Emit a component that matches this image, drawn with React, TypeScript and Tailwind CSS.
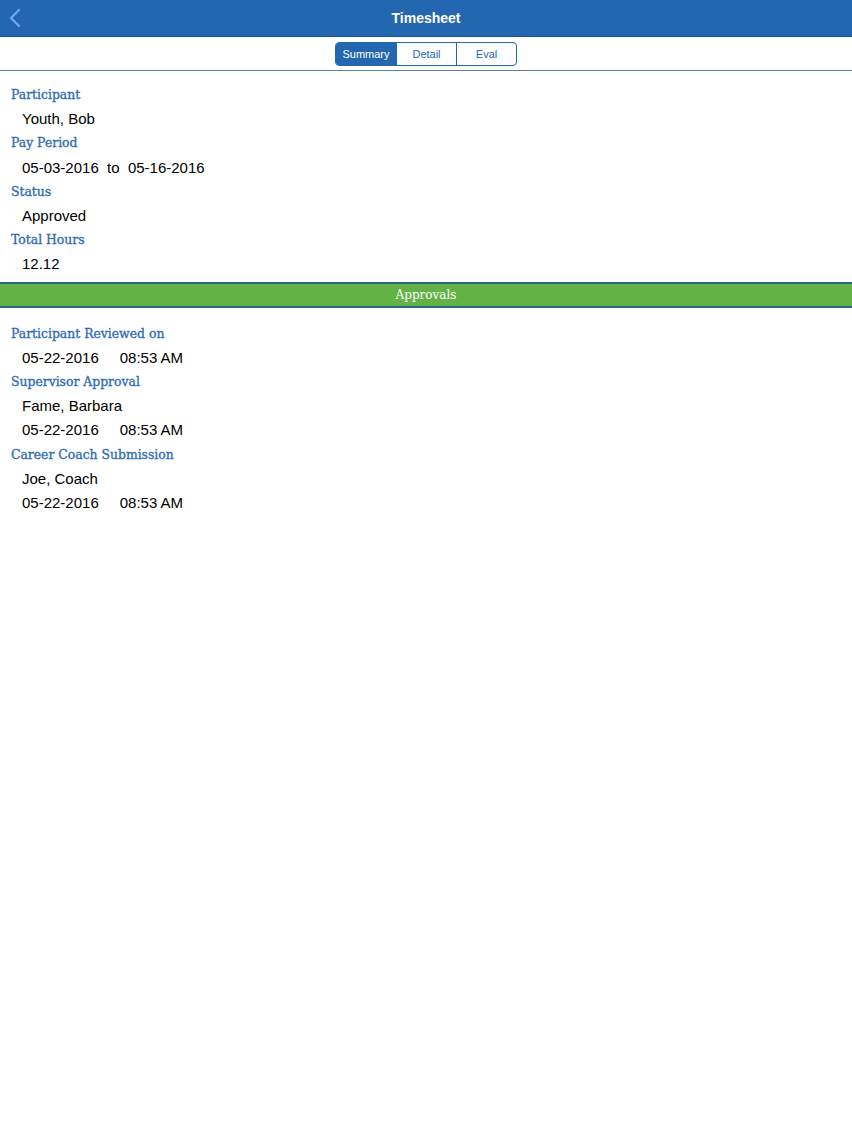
import React from 'react';

const label = 'font-["DejaVu_Serif",serif] text-[12.4px] text-[#2f6db3] leading-[24.2px] pl-[11px] [-webkit-text-stroke:0.35px_#2f6db3]';
const value = 'text-[15px] text-black leading-[24.2px] pl-[22px]';

function Label({ children }: { children: React.ReactNode }) {
  return <div className={label}>{children}</div>;
}

function Value({ children }: { children: React.ReactNode }) {
  return <div className={value}>{children}</div>;
}

function Stamp({ date, time }: { date: string; time: string }) {
  return (
    <div className={`${value} flex gap-[21px]`}>
      <span>{date}</span>
      <span>{time}</span>
    </div>
  );
}

export default function App() {
  const tabs = ['Summary', 'Detail', 'Eval'];

  return (
    <div className='min-h-[1136px] w-full bg-white font-["Liberation_Sans",Arial,sans-serif]'>
      {/* Nav bar */}
      <div className="relative flex h-[37px] items-center justify-center border-b border-[#1b5597] bg-[#2467b1]">
        <button className="absolute left-[8px] top-[8px] text-[#6fa6e6]" aria-label="Back">
          <svg width="14" height="20" viewBox="0 0 14 20" fill="none">
            <path d="M11 2 L3 10 L11 18" stroke="currentColor" strokeWidth="2.4" strokeLinecap="round" strokeLinejoin="round" />
          </svg>
        </button>
        <h1 className="text-[14px] font-bold text-white">Timesheet</h1>
      </div>

      {/* Segmented control */}
      <div className="flex justify-center border-b border-[#5a7fa8] pt-[5px] pb-[4px]">
        <div className="flex h-[24px] overflow-hidden rounded-[4px] border border-[#2467b1]">
          {tabs.map((t, i) => (
            <div
              key={t}
              className={`flex w-[60px] items-center justify-center text-[11px] ${
                i === 0 ? 'bg-[#2467b1] text-white' : 'text-[#2467b1]'
              } ${i > 0 ? 'border-l border-[#2467b1]' : ''}`}
            >
              {t}
            </div>
          ))}
        </div>
      </div>

      {/* Summary */}
      <div className="pt-[12px] pb-[5px]">
        <Label>Participant</Label>
        <Value>Youth, Bob</Value>
        <Label>Pay Period</Label>
        <Value>05-03-2016&nbsp;&nbsp;to&nbsp;&nbsp;05-16-2016</Value>
        <Label>Status</Label>
        <Value>Approved</Value>
        <Label>Total Hours</Label>
        <Value>12.12</Value>
      </div>

      {/* Approvals header */}
      <div className='flex h-[26px] items-center justify-center border-y-2 border-[#24688f] bg-[#62b246] font-["DejaVu_Serif",serif] text-[12px] text-white'>
        Approvals
      </div>

      <div className="pt-[14px]">
        <Label>Participant Reviewed on</Label>
        <Stamp date="05-22-2016" time="08:53 AM" />
        <Label>Supervisor Approval</Label>
        <Value>Fame, Barbara</Value>
        <Stamp date="05-22-2016" time="08:53 AM" />
        <Label>Career Coach Submission</Label>
        <Value>Joe, Coach</Value>
        <Stamp date="05-22-2016" time="08:53 AM" />
      </div>
    </div>
  );
}
